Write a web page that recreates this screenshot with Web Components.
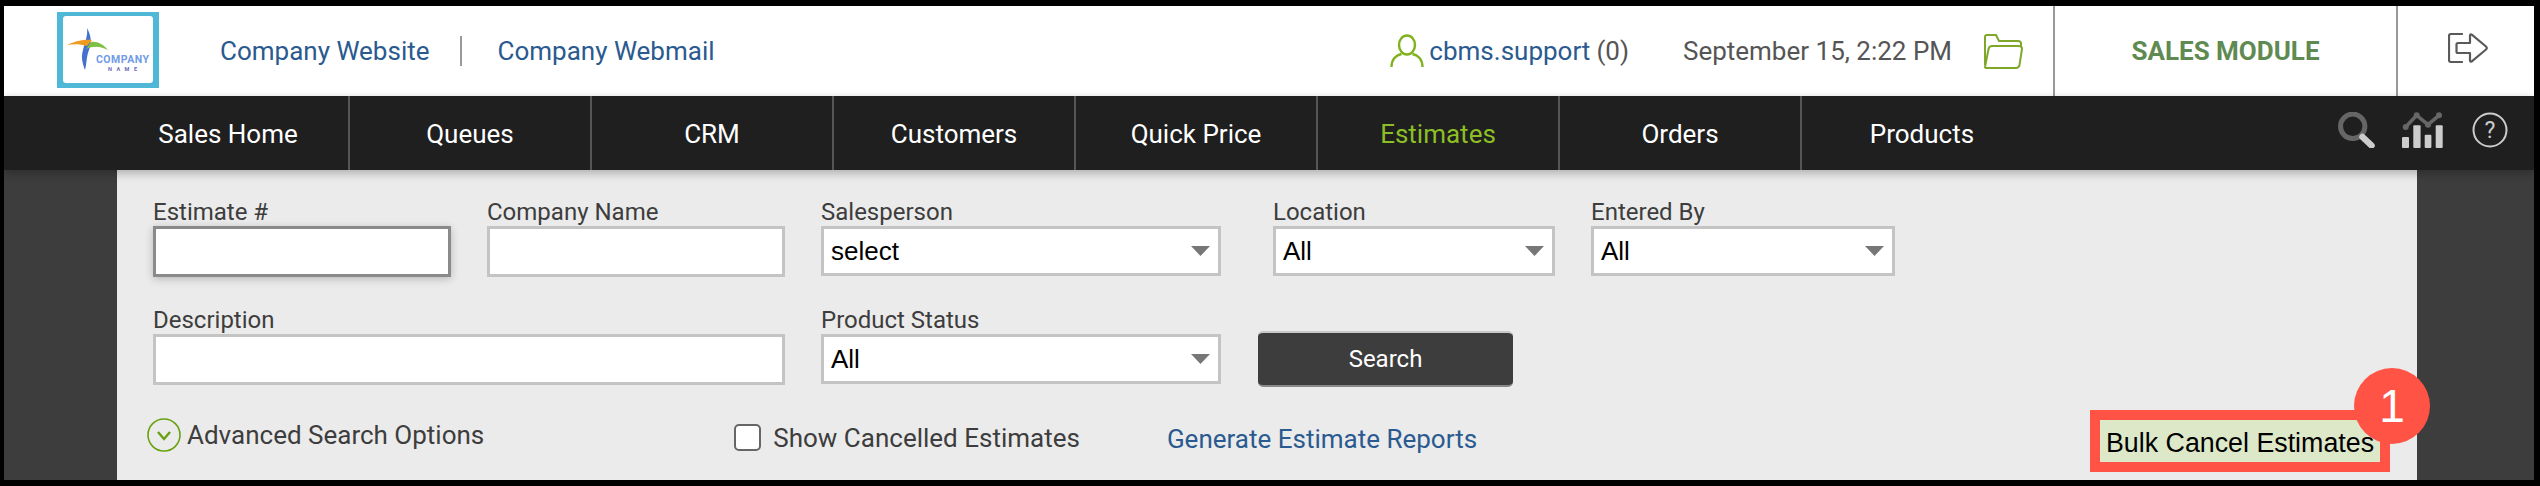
<!DOCTYPE html>
<html>
<head>
<meta charset="utf-8">
<title>Estimates</title>
<style>
    html, body { margin: 0; background: #000; }
    body { font-family: Roboto, "Liberation Sans", sans-serif; }
</style>
</head>
<body>
<sales-app></sales-app>
<script>
class TopBar extends HTMLElement {
    constructor() {
        super();
        this.attachShadow({ mode: 'open' });
    }

    connectedCallback() {
        this.shadowRoot.innerHTML = `
        <style>
            :host { display: flex; height: 90px; background: #fff; align-items: stretch; font-size: 26px; }
            a { color: #2a5a8f; text-decoration: none; }
            .logo { display: block; width: 102px; height: 76px; margin: 6px 61px 0 53px; }
            .links { display: flex; align-items: center; }
            .sep { width: 2px; height: 30px; background: #999; margin: 0 36px 0 30px; }
            .right { display: flex; align-items: center; margin-left: auto; color: #555; }
            .user { display: flex; align-items: center; margin-right: 54px; }
            .user svg { margin-right: 5px; }
            .count { margin-left: 6px; }
            .date { margin-right: 31px; }
            .folder { margin-right: 30px; }
            .module { width: 341px; display: flex; align-items: center; justify-content: center; border-left: 2px solid #999; color: #5f8a52; font-weight: 700; box-sizing: content-box; }
            .exit { width: 136px; display: flex; align-items: center; justify-content: center; border-left: 2px solid #999; }
            .exit svg { margin: -6px 0 0 3px; }
        </style>
        <svg class="logo" viewBox="0 0 102 76">
            <rect width="102" height="76" fill="#4fb8d6"/>
            <rect x="6" y="4" width="90" height="67" rx="3" fill="#fff"/>
            <path d="M30 16c4 7 5 14 2 22-3 8-2 13-4 20-3-8-4-13-2-20 2-8 5-14 4-22z" fill="#4470cf"/>
            <path d="M10 33c7-3 15-6 25-5l-5 6c-7-2-13-2-20-1z" fill="#f09a20"/>
            <path d="M51 38c-6-3-13-5-22-1l5-7c6-1 12 2 17 8z" fill="#7cc142"/>
            <text x="39" y="51" font-family="Roboto, sans-serif" font-weight="700" font-size="10.500" textLength="53" fill="#6f9be8">COMPANY</text>
            <text x="51" y="59" font-family="Roboto, sans-serif" font-weight="700" font-size="5.500" textLength="29" fill="#6a6ac0">NAME</text>
        </svg>
        <div class="links">
            <a href="#">Company Website</a>
            <span class="sep"></span>
            <a href="#">Company Webmail</a>
        </div>
        <div class="right">
            <div class="user">
                <svg width="34" height="34" viewBox="0 0 34 34" fill="none" stroke="#7fb21d" stroke-width="2.400">
                    <ellipse cx="17" cy="11" rx="8" ry="9.500"/>
                    <path d="M1.500 33c0-8 5-12 10-13M32.500 33c0-8-5-12-10-13"/>
                </svg>
                <a href="#">cbms.support</a><span class="count">(0)</span>
            </div>
            <span class="date">September 15, 2:22 PM</span>
            <svg class="folder" width="40" height="35" viewBox="0 0 40 35" fill="none" stroke="#7fa82a" stroke-width="2">
                <path d="M2 31V3c0-1 .6-2 2-2h9l3 6h19c1.500 0 3 1 3 2.500V12"/>
                <path d="M2 33c0 1 1 1 2 1h29c2 0 3-1 3.500-3L39 15c0-2-1-3-3-3H9c-2 0-3 1-3.500 3z"/>
            </svg>
            <div class="module" style="height:90px">SALES MODULE</div>
            <div class="exit" style="height:90px">
                <svg width="40" height="30" viewBox="0 0 40 30" fill="none" stroke="#5a5a5a" stroke-width="2.200" stroke-linejoin="round" stroke-linecap="round">
                    <path d="M14 1H3C1.500 1 1 2 1 3v24c0 1 .5 2 2 2h11"/>
                    <path d="M10 10h12V2.500c0-1 1-1.500 1.800-.8L38 13.500c1 1 1 2 0 3L23.800 28.300c-.8.700-1.800.2-1.800-.8V20H10c-1 0-1.500-.5-1.500-1.500v-7c0-1 .5-1.500 1.500-1.500z"/>
                </svg>
            </div>
        </div>`;
    }
}

class NavItem extends HTMLElement {
    constructor() {
        super();
        this.attachShadow({ mode: 'open' });
    }

    connectedCallback() {
        this.shadowRoot.innerHTML = `
        <style>
            :host { display: flex; width: 240px; height: 72px; padding-top: 2px; box-sizing: content-box; align-items: center; justify-content: center; border-right: 2px solid #555; color: #fff; }
            :host([active]) { color: #8cbe26; }
            :host([last]) { border-right-color: transparent; }
        </style>
        <slot></slot>`;
    }
}

class MainNav extends HTMLElement {
    constructor() {
        super();
        this.attachShadow({ mode: 'open' });
    }

    connectedCallback() {
        this.shadowRoot.innerHTML = `
        <style>
            :host { display: flex; height: 74px; background: #1f1f1f; font-size: 26px; padding-left: 104px; box-sizing: border-box; position: relative; z-index: 1; box-shadow: 0 3px 9px rgba(0, 0, 0, .28); }
            .icons { display: flex; align-items: center; margin-left: auto; height: 74px; margin-top: -3px; padding-right: 26px; }
            .icons svg { display: block; }
            .chart { margin: 0 29px 0 27px; }
        </style>
        <nav-item>Sales Home</nav-item>
        <nav-item>Queues</nav-item>
        <nav-item>CRM</nav-item>
        <nav-item>Customers</nav-item>
        <nav-item>Quick Price</nav-item>
        <nav-item active>Estimates</nav-item>
        <nav-item>Orders</nav-item>
        <nav-item last>Products</nav-item>
        <div class="icons">
            <svg width="37" height="36" viewBox="0 0 37 36" fill="none">
                <circle cx="14.700" cy="14.300" r="12.200" stroke="#666" stroke-width="5"/>
                <path d="M24.500 25l9 8.500" stroke="#ccc" stroke-width="6.500" stroke-linecap="round"/>
            </svg>
            <svg class="chart" width="41" height="36" viewBox="0 0 41 36" fill="none">
                <path d="M3.700 15L14.700 3.300 26 12.700 37 3.300" stroke="#666" stroke-width="3.500" stroke-linejoin="round"/>
                <g fill="#666">
                    <circle cx="3.700" cy="15" r="3"/>
                    <circle cx="14.700" cy="3.300" r="3"/>
                    <circle cx="26" cy="12.700" r="3"/>
                    <circle cx="37" cy="3.300" r="3"/>
                </g>
                <g fill="#ccc">
                    <rect x="0" y="25" width="7" height="11" rx="1"/>
                    <rect x="11.300" y="13.300" width="7.300" height="22.700" rx="1"/>
                    <rect x="22.700" y="22.700" width="6.700" height="13.300" rx="1"/>
                    <rect x="33.700" y="13.300" width="7" height="22.700" rx="1"/>
                </g>
            </svg>
            <svg width="36" height="36" viewBox="0 0 36 36" fill="none">
                <circle cx="18" cy="18" r="16.500" stroke="#ccc" stroke-width="2"/>
                <text x="18" y="26" text-anchor="middle" font-family="Roboto, sans-serif" font-size="23" fill="#ccc">?</text>
            </svg>
        </div>`;
    }
}

class FormField extends HTMLElement {
    constructor() {
        super();
        this.attachShadow({ mode: 'open' });
    }

    connectedCallback() {
        let label = this.getAttribute('label');
        let width = this.getAttribute('width');
        let value = this.getAttribute('value');
        let control = `<input type="text">`;

        if (value !== null) {
            control = `<div class="select"><span>${value}</span><svg width="19" height="10" viewBox="0 0 19 10"><path d="M0 0h19L9.500 10z" fill="#777"/></svg></div>`;
        }

        this.shadowRoot.innerHTML = `
        <style>
            :host { display: block; width: ${width}px; color: #3d3d3d; font-size: 24px; }
            label { display: block; height: 28px; line-height: 28px; white-space: nowrap; }
            input, .select { display: flex; box-sizing: border-box; width: 100%; height: 51px; margin: 0; background: #fff; border: 3px solid #c4c4c4; border-radius: 0; outline: none; }
            .select { height: 50px; align-items: center; justify-content: space-between; padding: 0 8px 0 7px; color: #000; font: 26px "Liberation Sans", Arial, sans-serif; }
            :host([focused]) input { border-color: #8a8a8a; box-shadow: 0 2px 8px rgba(0, 0, 0, .22); }
        </style>
        <label>${label}</label>
        ${control}`;
    }
}

class BulkCancel extends HTMLElement {
    constructor() {
        super();
        this.attachShadow({ mode: 'open' });
    }

    connectedCallback() {
        this.shadowRoot.innerHTML = `
        <style>
            :host { display: block; position: relative; box-sizing: border-box; width: 300px; height: 62px; border: 10px solid #ff5346; background: #dde8c9; color: #000; font: 26.800px/46px "Liberation Sans", Arial, sans-serif; text-align: center; white-space: nowrap; }
            .badge { position: absolute; top: -52px; right: -50px; width: 76px; height: 76px; border-radius: 50%; background: #ff5346; color: #fff; font: 46px/76px "Liberation Sans", Arial, sans-serif; text-align: center; }
        </style>
        <slot></slot>
        <span class="badge">1</span>`;
    }
}

class SearchPanel extends HTMLElement {
    constructor() {
        super();
        this.attachShadow({ mode: 'open' });
    }

    connectedCallback() {
        this.shadowRoot.innerHTML = `
        <style>
            :host { display: block; height: 310px; box-sizing: border-box; width: 2300px; margin-left: 113px; padding: 28px 0 0 36px; background: #ebebeb; color: #3d3d3d; font-size: 26px; }
            .row { display: flex; gap: 36px; align-items: flex-start; margin-bottom: 29px; }
            .search { display: block; box-sizing: border-box; width: 255px; height: 56px; margin: 25px 0 0 1px; background: #3d3d3d; border: 0; border-bottom: 2px solid #888; border-top: 2px solid #c8c8c8; border-radius: 5px; color: #fff; font: 24px Roboto, sans-serif; }
            .row.options { display: flex; gap: 0; height: 62px; margin: 23px 0 0 -6px; }
            .advanced { display: flex; align-items: center; margin-top: 8px; }
            .advanced svg { margin-right: 6px; }
            .cancelled { display: flex; align-items: center; margin: 13px 0 0 250px; }
            .box { box-sizing: border-box; width: 27px; height: 27px; margin: -2px 12px 0 0; border: 2px solid #666; border-radius: 5px; background: #fff; }
            a { margin: 14px 0 0 87px; color: #2a5a8f; text-decoration: none; }
            bulk-cancel { margin-left: auto; margin-right: 27px; }
        </style>
        <div class="row">
            <form-field label="Estimate #" width="298" focused></form-field>
            <form-field label="Company Name" width="298"></form-field>
            <form-field label="Salesperson" width="400" value="select" style="margin-right:16px"></form-field>
            <form-field label="Location" width="282" value="All"></form-field>
            <form-field label="Entered By" width="304" value="All"></form-field>
        </div>
        <div class="row" style="margin-bottom:0">
            <form-field label="Description" width="632"></form-field>
            <form-field label="Product Status" width="400" value="All"></form-field>
            <button class="search">Search</button>
        </div>
        <div class="row options">
            <div class="advanced">
                <svg width="34" height="34" viewBox="0 0 34 34" fill="none" stroke="#6aa00f">
                    <circle cx="17" cy="17" r="16" stroke-width="1.600"/>
                    <path d="M11 14l6 7 6-7" stroke-width="2.400"/>
                </svg>
                Advanced Search Options
            </div>
            <label class="cancelled"><span class="box"></span>Show Cancelled Estimates</label>
            <a href="#">Generate Estimate Reports</a>
            <bulk-cancel>Bulk Cancel Estimates</bulk-cancel>
        </div>`;
    }
}

class SalesApp extends HTMLElement {
    constructor() {
        super();
        this.attachShadow({ mode: 'open' });
    }

    connectedCallback() {
        this.shadowRoot.innerHTML = `
        <style>
            :host { display: block; width: 2530px; height: 474px; margin: 6px 0 0 4px; background: #3d3d3d; overflow: hidden; }
        </style>
        <top-bar></top-bar>
        <main-nav></main-nav>
        <search-panel></search-panel>`;
    }
}

customElements.define('top-bar', TopBar);
customElements.define('nav-item', NavItem);
customElements.define('main-nav', MainNav);
customElements.define('form-field', FormField);
customElements.define('bulk-cancel', BulkCancel);
customElements.define('search-panel', SearchPanel);
customElements.define('sales-app', SalesApp);
</script>
</body>
</html>
